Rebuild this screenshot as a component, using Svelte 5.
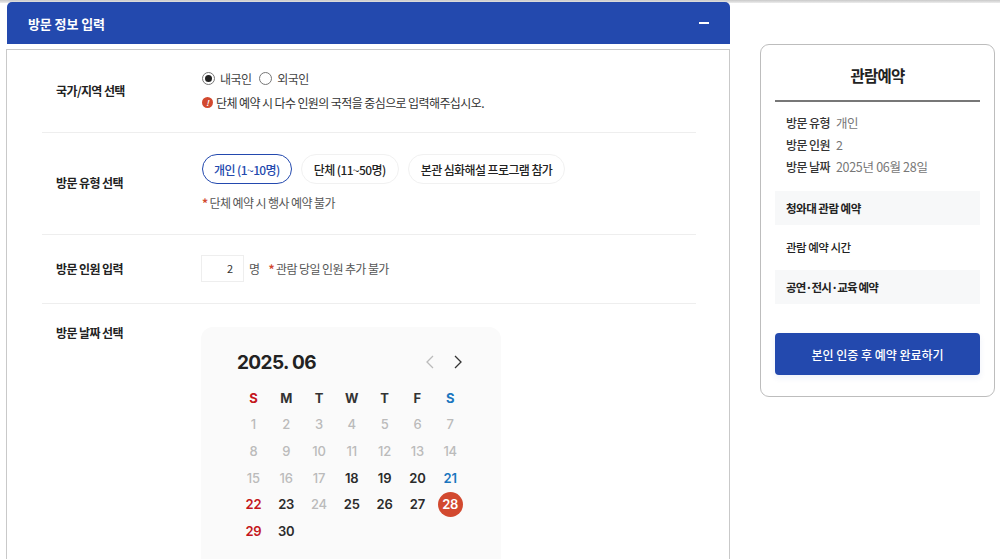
<script>
    const weekdays = ['S', 'M', 'T', 'W', 'T', 'F', 'S'];
    const lastPast = 17;
    const days = Array.from({ length: 30 }, (_, i) => i + 1);

    function dayClass(d) {
        const col = (d - 1) % 7;
        if (d === 28) return 'day picked';
        if (d <= lastPast || d === 24) return 'day past';
        if (col === 0) return 'day sun';
        if (col === 6) return 'day sat';
        return 'day';
    }
</script>

<style>
    :global(html), :global(body) {
        margin: 0;
        height: 559px;
        overflow: hidden;
        background: #fff;
    }

    .page {
        position: relative;
        display: flex;
        align-items: flex-start;
        height: 559px;
        overflow: hidden;
        padding: 2px 0 0 6px;
        box-sizing: border-box;
        font-family: "Noto Sans CJK KR", "Noto Sans", sans-serif;
        letter-spacing: -0.6px;
        color: #222;
    }

    .shade {
        position: absolute;
        left: 0;
        right: 0;
        top: 0;
        height: 3px;
        background: linear-gradient(#c9c9c9, #ececec);
    }

    .main {
        position: relative;
        width: 724px;
        flex: none;
    }

    .head {
        display: flex;
        align-items: center;
        justify-content: space-between;
        height: 42px;
        margin-left: 1px;
        padding: 0 21px 0 21px;
        box-sizing: border-box;
        background: #2349ae;
        border-radius: 5px 5px 0 0;
        color: #fff;
        font-size: 13px;
        font-weight: 700;
        letter-spacing: -0.1px;
    }

    .minus {
        width: 10px;
        height: 2px;
        background: #fff;
    }

    .panel {
        margin-top: 5px;
        height: 560px;
        border: 1px solid #c9c9c9;
        padding: 0 33px 0 35px;
        box-sizing: border-box;
    }

    .row {
        display: grid;
        grid-template-columns: 145px 1fr;
        align-items: center;
        border-bottom: 1px solid #eee;
        box-sizing: border-box;
        padding: 0 0 2px 14px;
    }

    .r1 { height: 83px; }
    .r2 { height: 102px; }
    .r3 { height: 69px; }
    .r4 {
        align-items: start;
        border-bottom: none;
        padding-top: 20px;
    }

    .label {
        font-size: 12px;
        font-weight: 700;
        color: #222;
    }

    .radios {
        display: flex;
        align-items: center;
        padding-left: 1px;
        font-size: 12px;
        color: #444;
    }

    .radio {
        width: 11px;
        height: 11px;
        border: 1px solid #777;
        border-radius: 50%;
        margin-right: 5px;
        display: flex;
        align-items: center;
        justify-content: center;
    }

    .radio.on::after {
        content: "";
        width: 7px;
        height: 7px;
        border-radius: 50%;
        background: #222;
    }

    .radios span + .radio {
        margin-left: 8px;
    }

    .notice {
        display: flex;
        align-items: center;
        gap: 3px;
        margin-top: 7px;
        padding-left: 1px;
        font-size: 12px;
        color: #333;
    }

    .dot {
        width: 11px;
        height: 11px;
        border-radius: 50%;
        background: #d2492f;
        color: #fff;
        font-size: 8px;
        line-height: 11px;
        text-align: center;
        font-weight: 700;
        letter-spacing: 0;
    }

    .pills {
        display: flex;
        gap: 9px;
        padding-left: 1px;
    }

    .pill {
        height: 30px;
        padding: 0 12px;
        border: 1px solid #f1f1f1;
        border-radius: 15px;
        background: #fff;
        font-family: inherit;
        font-size: 12px;
        font-weight: 500;
        letter-spacing: -0.6px;
        color: #222;
    }

    .pill.on {
        padding: 0 11px;
        border: 1.5px solid #2349ae;
        color: #2349ae;
    }

    .star {
        color: #d2492f;
        font-weight: 700;
    }

    .hint {
        margin-top: 10px;
        padding-left: 1px;
        font-size: 12px;
        color: #555;
    }

    .count {
        display: flex;
        align-items: center;
        font-size: 12px;
        color: #555;
    }

    .count input {
        width: 43px;
        height: 27px;
        padding: 0 10px 0 0;
        margin-right: 5px;
        box-sizing: border-box;
        border: 1px solid #eee;
        background: #fff;
        text-align: right;
        font-family: inherit;
        font-size: 11px;
        color: #333;
    }

    .count .hint-inline {
        margin-left: 9px;
    }

    .calendar {
        width: 300px;
        height: 290px;
        margin-top: 3px;
        background: #fafafa;
        border-radius: 12px;
        padding: 22px 36px 0 36px;
        box-sizing: border-box;
        font-family: Inter, "Noto Sans", sans-serif;
        letter-spacing: 0;
    }

    .cal-top {
        display: flex;
        align-items: center;
        justify-content: space-between;
        height: 26px;
        padding-right: 1px;
    }

    .month {
        font-size: 19px;
        font-weight: 700;
        letter-spacing: -0.6px;
        color: #222;
    }

    .arrows {
        display: flex;
        gap: 16px;
    }

    .grid {
        display: grid;
        grid-template-columns: repeat(7, 32.8px);
        grid-auto-rows: 26.6px;
        margin-top: 10px;
        text-align: center;
        align-items: center;
        justify-items: center;
    }

    .wd {
        font-size: 13px;
        font-weight: 700;
        color: #333;
    }

    .wd.sun { color: #c4161c; }
    .wd.sat { color: #1a76bf; }

    .day {
        width: 25px;
        height: 25px;
        line-height: 25px;
        font-size: 13px;
        font-weight: 600;
        letter-spacing: -0.2px;
        color: #2b2b2b;
    }

    .day.past { color: #bbb; font-weight: 500; }
    .day.sun { color: #c4161c; }
    .day.sat { color: #1a76bf; }

    .day.picked {
        border-radius: 50%;
        background: #d2492f;
        color: #fff;
    }

    .summary {
        flex: none;
        width: 235px;
        height: 353px;
        margin: 42px 0 0 30px;
        padding: 0 14px;
        box-sizing: border-box;
        border: 1px solid #bdbdbd;
        border-radius: 9px;
        background: #fff;
    }

    .summary h2 {
        margin: 0;
        height: 55px;
        line-height: 60px;
        border-bottom: 2px solid #777;
        box-sizing: content-box;
        text-align: center;
        font-size: 15.5px;
        font-weight: 700;
        letter-spacing: -0.8px;
        color: #222;
    }

    .info {
        margin: 10px 0 13px;
        padding-left: 11px;
        font-size: 12px;
    }

    .info div {
        display: flex;
        gap: 6px;
        height: 22px;
        line-height: 22px;
    }

    .info b {
        font-weight: 500;
        color: #333;
    }

    .info span {
        font-size: 12.5px;
        letter-spacing: -0.3px;
        color: #777;
    }

    .sect {
        height: 34px;
        line-height: 34px;
        padding-left: 11px;
        font-size: 11.5px;
        font-weight: 500;
        letter-spacing: -0.5px;
        color: #222;
    }

    .sect.tint {
        background: #f7f8f9;
        font-weight: 700;
    }

    .sect.plain {
        height: 45px;
        line-height: 45px;
    }

    .sect.tight {
        letter-spacing: -0.8px;
    }

    .confirm {
        display: block;
        width: 100%;
        height: 42px;
        margin-top: 29px;
        border: none;
        border-radius: 4px;
        background: #2349ae;
        color: #fff;
        font-family: inherit;
        font-size: 12px;
        font-weight: 500;
        letter-spacing: 0;
        box-shadow: 0 3px 6px rgba(35, 73, 174, 0.08);
    }
</style>

<div class="page">
    <div class="shade"></div>

    <div class="main">
        <div class="head">
            <span>방문 정보 입력</span>
            <span class="minus"></span>
        </div>

        <div class="panel">
            <div class="row r1">
                <div class="label">국가/지역 선택</div>
                <div>
                    <div class="radios">
                        <i class="radio on"></i><span>내국인</span>
                        <i class="radio"></i><span>외국인</span>
                    </div>
                    <div class="notice"><i class="dot">!</i>단체 예약 시 다수 인원의 국적을 중심으로 입력해주십시오.</div>
                </div>
            </div>

            <div class="row r2">
                <div class="label">방문 유형 선택</div>
                <div>
                    <div class="pills">
                        <button class="pill on">개인 (1~10명)</button>
                        <button class="pill">단체 (11~50명)</button>
                        <button class="pill">본관 심화해설 프로그램 참가</button>
                    </div>
                    <div class="hint"><span class="star">*</span> 단체 예약 시 행사 예약 불가</div>
                </div>
            </div>

            <div class="row r3">
                <div class="label">방문 인원 입력</div>
                <div class="count">
                    <input value="2" />
                    <span>명</span>
                    <span class="hint-inline"><span class="star">*</span> 관람 당일 인원 추가 불가</span>
                </div>
            </div>

            <div class="row r4">
                <div class="label">방문 날짜 선택</div>
                <div class="calendar">
                    <div class="cal-top">
                        <span class="month">2025. 06</span>
                        <span class="arrows">
                            <svg width="12" height="16" viewBox="0 0 12 16" fill="none" stroke="#bbb" stroke-width="1.3"><path d="M9 2 3 8l6 6" /></svg>
                            <svg width="12" height="16" viewBox="0 0 12 16" fill="none" stroke="#333" stroke-width="1.3"><path d="m3 2 6 6-6 6" /></svg>
                        </span>
                    </div>
                    <div class="grid">
                        {#each weekdays as w, i}
                            <span class="wd" class:sun={i === 0} class:sat={i === 6}>{w}</span>
                        {/each}
                        {#each days as d}
                            <span class={dayClass(d)}>{d}</span>
                        {/each}
                    </div>
                </div>
            </div>
        </div>
    </div>

    <aside class="summary">
        <h2>관람예약</h2>
        <div class="info">
            <div><b>방문 유형</b><span>개인</span></div>
            <div><b>방문 인원</b><span>2</span></div>
            <div><b>방문 날짜</b><span>2025년 06월 28일</span></div>
        </div>
        <div class="sect tint">청와대 관람 예약</div>
        <div class="sect plain">관람 예약 시간</div>
        <div class="sect tint tight">공연·전시·교육 예약</div>
        <button class="confirm">본인 인증 후 예약 완료하기</button>
    </aside>
</div>
